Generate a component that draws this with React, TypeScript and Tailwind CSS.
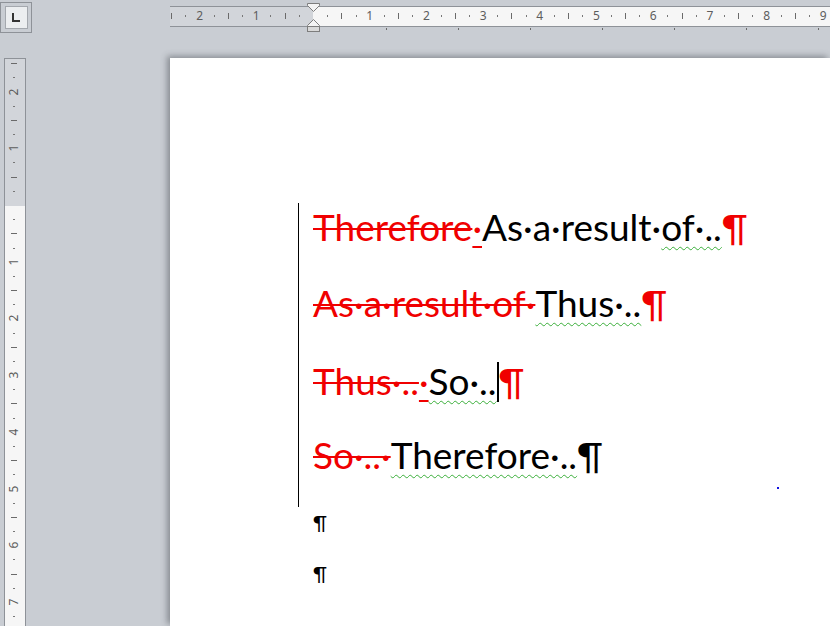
import type React from "react"

const CM = 56.7
const ORIGIN = 143

const red = "text-[#f00000]"

function HRuler() {
  const marks: React.ReactNode[] = []
  for (let q = -11; q <= 40; q++) {
    const x = ORIGIN + (q * CM) / 4
    if (x < 0 || x > 662 || q === 0) continue
    if (q % 4 === 0) {
      marks.push(
        <span
          key={q}
          className="absolute top-[2px] w-[14px] -ml-[7px] text-center text-[12px] leading-[16px] text-[#5d5d5d]"
          style={{ left: x }}
        >
          {Math.abs(q / 4)}
        </span>,
      )
    } else if (q % 2 === 0) {
      marks.push(<span key={q} className="absolute top-[7px] h-[6px] w-px bg-[#6a6a6a]" style={{ left: x }} />)
    } else {
      marks.push(<span key={q} className="absolute top-[9px] h-[2px] w-px bg-[#777]" style={{ left: x }} />)
    }
  }
  const tabs = [0, 1, 2, 3, 4, 5, 6].map((i) => (
    <span key={i} className="absolute top-[22px] h-[2px] w-px bg-[#6a6a6a]" style={{ left: 215.7 + i * 72 }} />
  ))
  return (
    <div className="relative mt-[6px] ml-[170px] h-[21px] w-[660px]">
      <div className="flex h-full border-y border-[#8e9298]">
        <div className="w-[143px] bg-[#d2d5da]" />
        <div className="flex-1 bg-[#f6f6f6]" />
      </div>
      {marks}
      {tabs}
      <svg className="absolute -top-[3px] left-[137px]" width="13" height="30" viewBox="0 0 13 30">
        <path d="M0.5 0.5 H12.5 V2.5 L6.5 8.5 L0.5 2.5 Z" fill="#f4f4f4" stroke="#7d7d7d" />
        <path d="M6.5 16.5 L12.5 22.5 V23.5 H0.5 V22.5 Z" fill="#f4f4f4" stroke="#7d7d7d" />
        <rect x="0.5" y="23.5" width="12" height="5" fill="#d9d9d9" stroke="#7d7d7d" />
      </svg>
    </div>
  )
}

function VRuler() {
  const marks: React.ReactNode[] = []
  for (let q = -11; q <= 30; q++) {
    const y = 147 + (q * CM) / 4
    if (y < 0 || y > 570 || q === 0) continue
    if (q % 4 === 0) {
      marks.push(
        <span
          key={q}
          className="absolute left-[3px] h-[14px] w-[14px] -mt-[7px] -rotate-90 text-center text-[12px] leading-[14px] text-[#5d5d5d]"
          style={{ top: y }}
        >
          {Math.abs(q / 4)}
        </span>,
      )
    } else if (q % 2 === 0) {
      marks.push(<span key={q} className="absolute left-[7px] h-px w-[6px] bg-[#6a6a6a]" style={{ top: y }} />)
    } else {
      marks.push(<span key={q} className="absolute left-[9px] h-px w-[2px] bg-[#777]" style={{ top: y }} />)
    }
  }
  return (
    <div className="relative ml-[4px] h-[570px] w-[22px] shrink-0">
      <div className="flex h-full flex-col border-x border-t border-[#8e9298]">
        <div className="h-[147px] bg-[#d2d5da]" />
        <div className="flex-1 bg-[#f6f6f6]" />
      </div>
      {marks}
    </div>
  )
}

function Del({ children }: { children: React.ReactNode }) {
  return <span className={`${red} line-through decoration-[2px]`}>{children}</span>
}

function Ins({ children }: { children: React.ReactNode }) {
  return <span className={`${red} underline decoration-[2px] underline-offset-[5px]`}>{children}</span>
}

function Wavy({ children }: { children: React.ReactNode }) {
  return (
    <span className="underline decoration-wavy decoration-[#3aae3a] decoration-[1px] underline-offset-[5px]">
      {children}
    </span>
  )
}

export default function App() {
  return (
    <div className="relative h-[626px] w-[830px] overflow-hidden bg-[#c9cdd3] font-['Noto_Sans',sans-serif]">
      <div className="flex h-[58px]">
        <div className="mt-[2px] flex h-[31px] w-[32px] shrink-0 items-center justify-center border border-[#8e9298]">
          <div className="flex h-[23px] w-[23px] items-center justify-center border border-[#a4a8ae] bg-[#eceef0]">
            <svg width="9" height="9" viewBox="0 0 9 9">
              <path d="M1 0 V8 H8" fill="none" stroke="#333" strokeWidth="2" />
            </svg>
          </div>
        </div>
        <div className="-ml-[32px]">
          <HRuler />
        </div>
      </div>
      <div className="flex">
        <VRuler />
        <div className="relative ml-[144px] h-[568px] flex-1 bg-white pt-[145px] pl-[143px] shadow-[-3px_-2px_6px_rgba(60,64,72,0.45)] font-['Lato',sans-serif]">
          <div className="-ml-[15px] border-l border-black pl-[14px] text-[37px] text-black">
            <p className="h-[76px] whitespace-nowrap leading-[47px]">
              <Del>Therefore</Del>
              <Ins>·</Ins>
              As·a·result·<Wavy>of·..</Wavy>
              <span className={red}>¶</span>
            </p>
            <p className="h-[76px] whitespace-nowrap leading-[47px]">
              <Del>As·a·result·of·</Del>
              <Wavy>Thus·..</Wavy>
              <span className={red}>¶</span>
            </p>
            <p className="h-[76px] whitespace-nowrap leading-[47px]">
              <Del>Thus·..</Del>
              <Ins>·</Ins>
              <Wavy>So·..</Wavy>
              <span className="inline-block h-[40px] w-[2px] translate-y-[7px] bg-black" />
              <span className={red}>¶</span>
            </p>
            <p className="h-[76px] whitespace-nowrap leading-[47px]">
              <Del>So·..·</Del>
              <Wavy>Therefore·..</Wavy>¶
            </p>
          </div>
          <p className="mt-[3px] h-[51px] text-[20px] leading-[24px]">¶</p>
          <p className="h-[51px] text-[20px] leading-[24px]">¶</p>
          <span className="absolute left-[607px] top-[429px] h-[2px] w-[2px] bg-[#1010e0]" />
        </div>
      </div>
    </div>
  )
}
